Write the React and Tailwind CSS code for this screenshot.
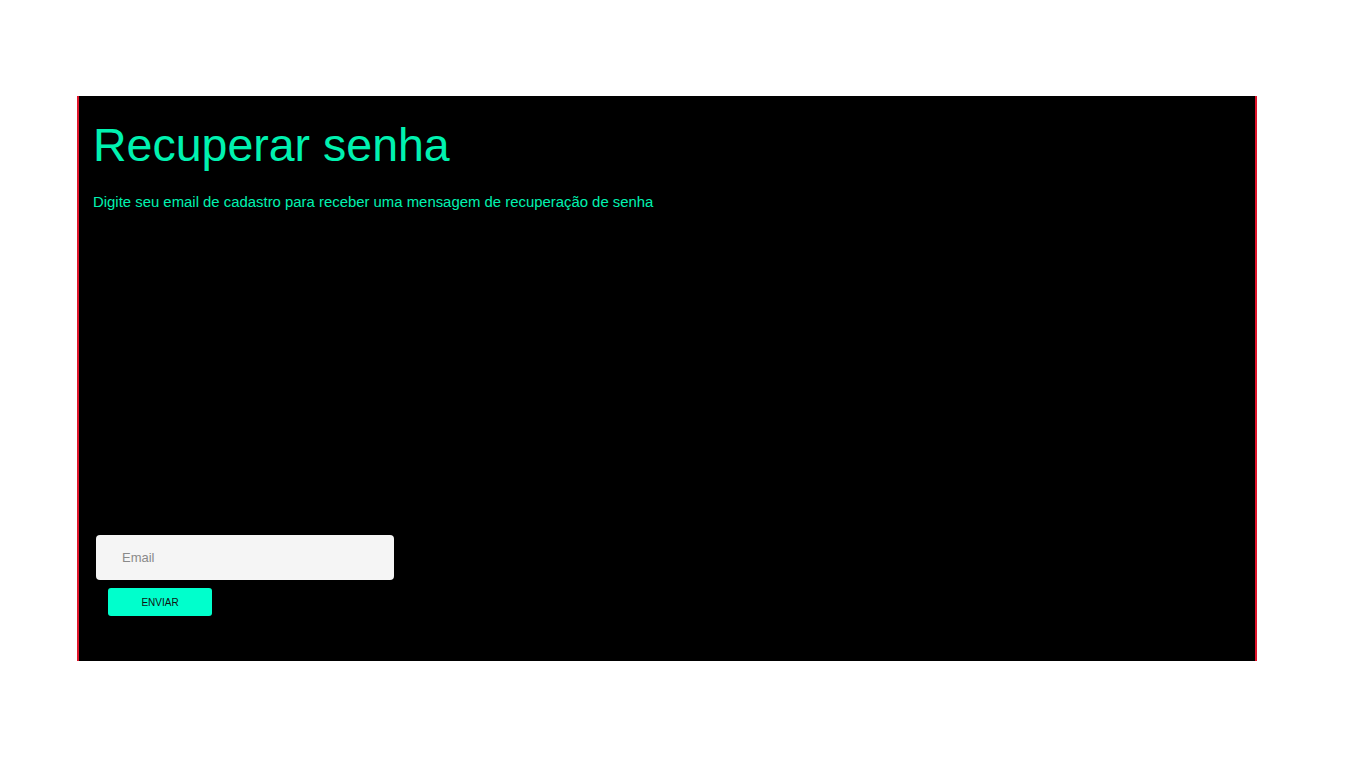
export default function App() {
  return (
    <div className="min-h-screen bg-white pt-[96px] pl-[77px]" style={{ fontFamily: '"Liberation Sans", Arial, sans-serif' }}>
      <section className="w-[1180px] h-[565px] bg-black border-x-2 border-[#e0142a] flex flex-col">
        <h1 className="mt-[26px] ml-[14px] text-[46.5px] leading-none text-[#00f2b0]">Recuperar senha</h1>
        <p className="mt-[26px] ml-[14px] text-[14.9px] leading-none text-[#00f2b0]">
          Digite seu email de cadastro para receber uma mensagem de recuperação de senha
        </p>
        <form className="mt-[326px] ml-[17px] flex flex-col items-start">
          <input
            type="email"
            placeholder="Email"
            className="w-[298px] h-[45px] rounded-[4px] bg-[#f5f5f5] pl-[26px] text-[13px] text-black placeholder:text-[#8a8a8a] outline-none"
          />
          <button
            type="button"
            className="mt-[8px] ml-[12px] w-[104px] h-[28px] rounded-[3px] bg-[#00ffcc] text-[10px] text-[#111]"
          >
            ENVIAR
          </button>
        </form>
      </section>
    </div>
  );
}
